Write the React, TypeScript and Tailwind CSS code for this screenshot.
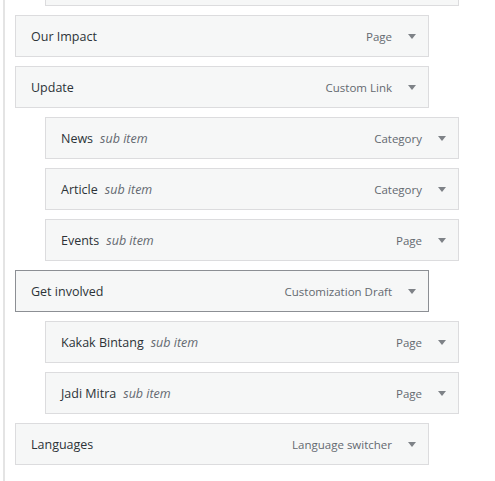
import React from "react";

type Item = {
  title: string;
  type: string;
  depth: number;
  sub?: boolean;
  active?: boolean;
  first?: boolean;
};

const items: Item[] = [
  { title: "", type: "", depth: 1, first: true },
  { title: "Our Impact", type: "Page", depth: 0 },
  { title: "Update", type: "Custom Link", depth: 0 },
  { title: "News", type: "Category", depth: 1, sub: true },
  { title: "Article", type: "Category", depth: 1, sub: true },
  { title: "Events", type: "Page", depth: 1, sub: true },
  { title: "Get involved", type: "Customization Draft", depth: 0, active: true },
  { title: "Kakak Bintang", type: "Page", depth: 1, sub: true },
  { title: "Jadi Mitra", type: "Page", depth: 1, sub: true },
  { title: "Languages", type: "Language switcher", depth: 0 },
];

function Arrow() {
  return (
    <svg width="8" height="5" viewBox="0 0 8 5" className="block">
      <path d="M0 0 H8 L4 5 Z" fill="#7e8287" />
    </svg>
  );
}

function MenuItem({ item }: { item: Item }) {
  return (
    <div
      className={
        "flex h-[42px] w-[414px] shrink-0 items-center border bg-[#f6f7f7] pl-[15px] " +
        (item.active ? "border-[#8c8f94] " : "border-[#dcdcde] ") +
        (item.depth === 1 ? "ml-[30px] " : "ml-0 ") +
        (item.first ? "mt-[-36px] " : "")
      }
    >
      {item.first ? null : (
        <>
          <div className="flex min-w-0 flex-1 items-baseline pt-[2px]">
            <span className="text-[12.5px] font-medium text-[#2c3338]">{item.title}</span>
            {item.sub ? (
              <span className="ml-[7px] text-[12.5px] italic text-[#646970]">sub item</span>
            ) : null}
          </div>
          <span className="pt-[2px] text-[11.5px] text-[#646970]">{item.type}</span>
          <div className="flex w-[36px] items-center justify-center pl-[3px] pt-[1px]">
            <Arrow />
          </div>
        </>
      )}
    </div>
  );
}

export default function App() {
  return (
    <div
      className="h-[481px] w-[495px] overflow-hidden bg-white"
      style={{ fontFamily: '"Open Sans", "Noto Sans", sans-serif' }}
    >
      <div className="ml-[3px] flex h-full border-l-2 border-[#e4e4e4] pl-[10px]">
        <div className="flex flex-col gap-[9px]">
          {items.map((it, i) => (
            <MenuItem key={i} item={it} />
          ))}
        </div>
      </div>
    </div>
  );
}
